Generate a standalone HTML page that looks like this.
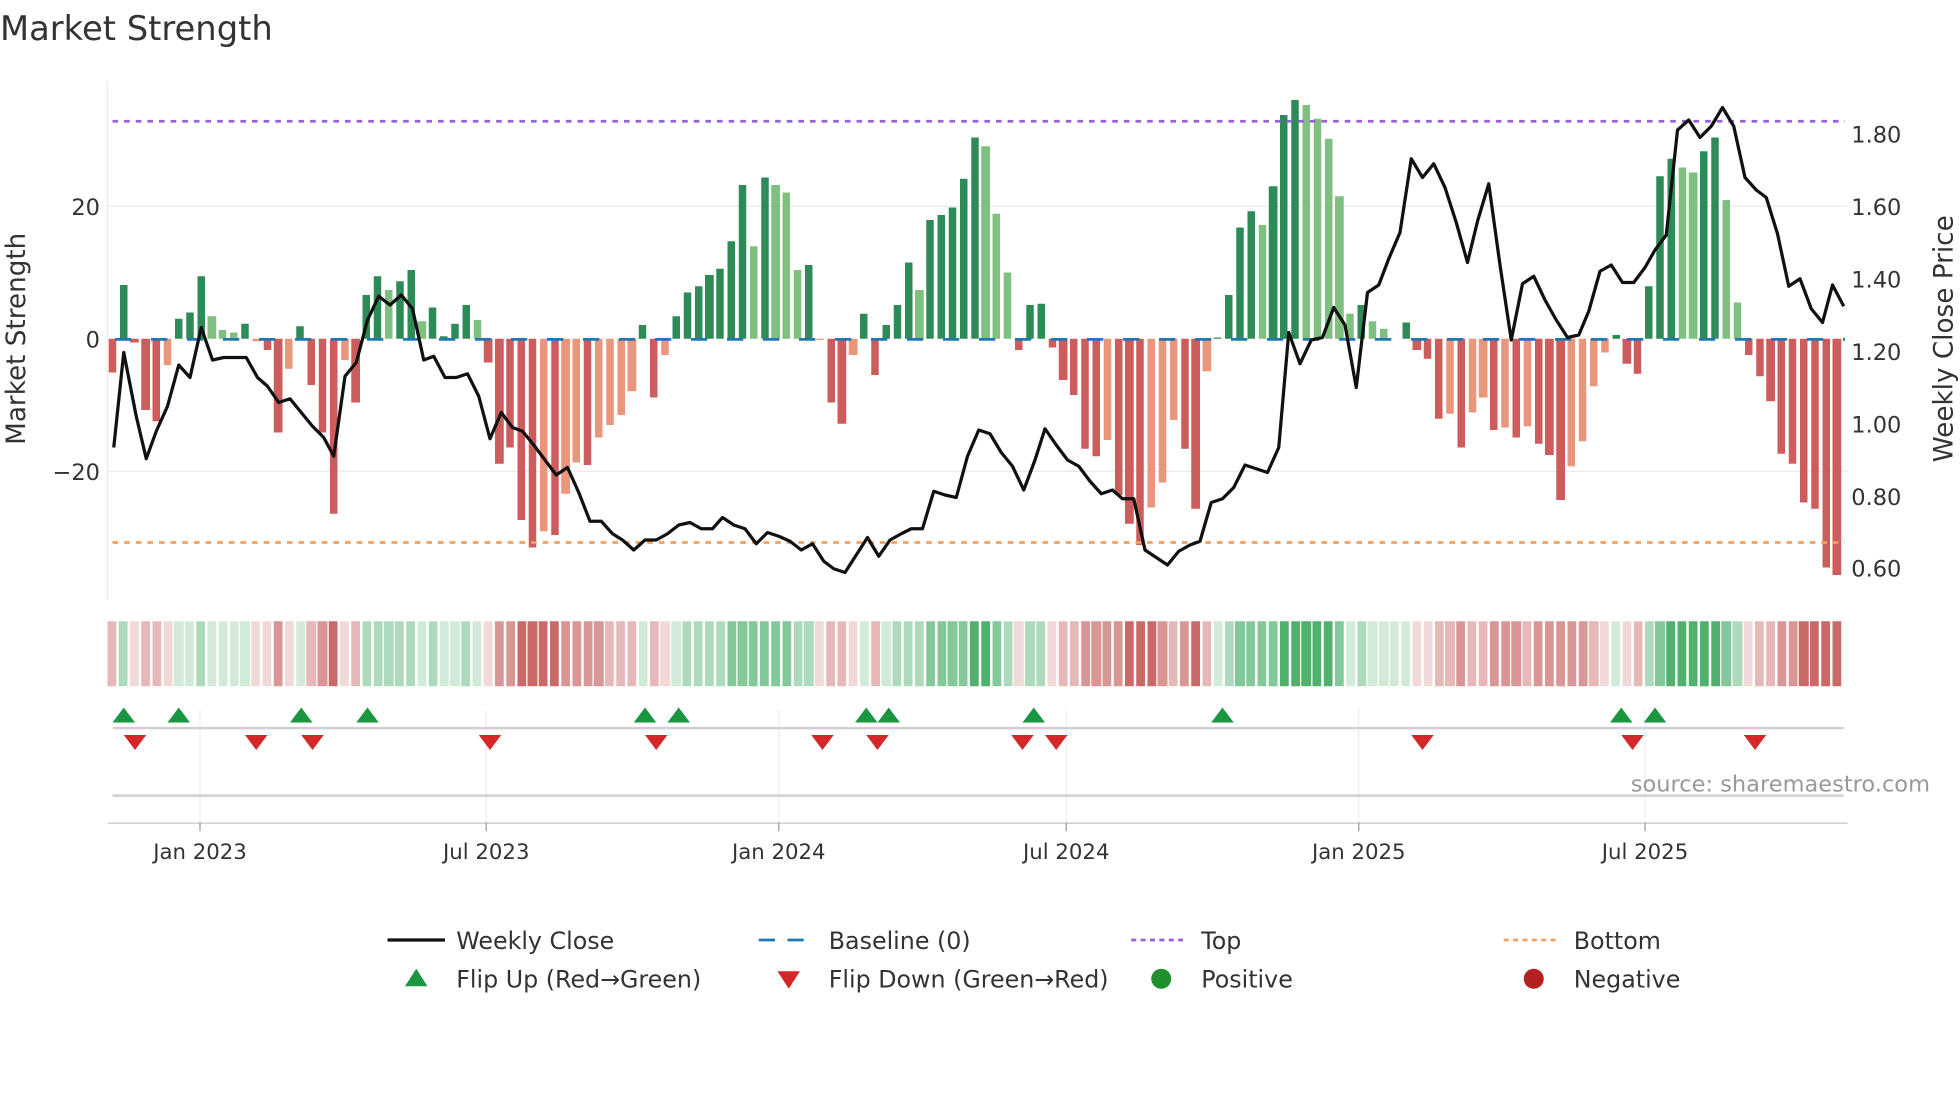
<!DOCTYPE html>
<html><head><meta charset="utf-8">
<style>
html,body{margin:0;padding:0;background:#fff;overflow:hidden;}
#w{position:absolute;left:0;top:0;width:1568px;height:882px;transform:scale(1.25);transform-origin:0 0;font-family:"DejaVu Sans","Liberation Sans",sans-serif;}
svg{position:absolute;left:0;top:0;}
#bars{position:absolute;left:85.465px;top:0;height:271px;display:flex;align-items:flex-end;}
#bars b{display:block;width:6.2px;margin:0 1.335px;flex:none;}
#bars .R,#bars .r{transform:translateY(100%);}
.G{background:#2e8b57}.g{background:#7fbf7f}.R{background:#cd5c5c}.r{background:#e9967a}
#heat{position:absolute;left:85.465px;top:497px;height:52px;display:flex;}
#heat i{display:block;width:7.2px;margin:0 0.835px;height:52px;flex:none;}
.a1{background:rgba(49,163,84,.22)}.a2{background:rgba(49,163,84,.4)}.a3{background:rgba(49,163,84,.6)}.a4{background:rgba(49,163,84,.85)}
.b1{background:rgba(192,80,77,.22)}.b2{background:rgba(192,80,77,.4)}.b3{background:rgba(192,80,77,.6)}.b4{background:rgba(192,80,77,.85)}
</style></head>
<body><div id="w">
<svg width="1568" height="882" viewBox="0 0 1568 882">
<g stroke="#ececf0" stroke-width="1.2">
<line x1="86" y1="165" x2="1478" y2="165"/>
<line x1="86" y1="377" x2="1478" y2="377"/>
<line x1="86" y1="65" x2="86" y2="480"/>
</g>
</svg>
<div id="bars">
<b class=R style=height:27px></b><b class=G style=height:43px></b><b class=R style=height:3px></b><b class=R style=height:57px></b><b class=R style=height:66px></b><b class=r style=height:21px></b><b class=G style=height:16px></b><b class=G style=height:21px></b><b class=G style=height:50px></b><b class=g style=height:18px></b>
<b class=g style=height:7px></b><b class=g style=height:5px></b><b class=G style=height:12px></b><b class=r style=height:2px></b><b class=R style=height:9px></b><b class=R style=height:75px></b><b class=r style=height:24px></b><b class=G style=height:10px></b><b class=R style=height:37px></b><b class=R style=height:75px></b>
<b class=R style=height:140px></b><b class=r style=height:17px></b><b class=R style=height:51px></b><b class=G style=height:35px></b><b class=G style=height:50px></b><b class=g style=height:39px></b><b class=G style=height:46px></b><b class=G style=height:55px></b><b class=g style=height:14px></b><b class=G style=height:25px></b>
<b class=G style=height:2px></b><b class=G style=height:12px></b><b class=G style=height:27px></b><b class=g style=height:15px></b><b class=R style=height:19px></b><b class=R style=height:100px></b><b class=R style=height:87px></b><b class=R style=height:145px></b><b class=R style=height:167px></b><b class=r style=height:154px></b>
<b class=R style=height:157px></b><b class=r style=height:124px></b><b class=r style=height:99px></b><b class=R style=height:101px></b><b class=r style=height:79px></b><b class=r style=height:69px></b><b class=r style=height:61px></b><b class=r style=height:42px></b><b class=G style=height:11px></b><b class=R style=height:47px></b>
<b class=r style=height:13px></b><b class=G style=height:18px></b><b class=G style=height:37px></b><b class=G style=height:42px></b><b class=G style=height:51px></b><b class=G style=height:56px></b><b class=G style=height:78px></b><b class=G style=height:123px></b><b class=g style=height:74px></b><b class=G style=height:129px></b>
<b class=g style=height:123px></b><b class=g style=height:117px></b><b class=g style=height:55px></b><b class=G style=height:59px></b><b class=r style=height:1px></b><b class=R style=height:51px></b><b class=R style=height:68px></b><b class=r style=height:13px></b><b class=G style=height:20px></b><b class=R style=height:29px></b>
<b class=G style=height:11px></b><b class=G style=height:27px></b><b class=G style=height:61px></b><b class=g style=height:39px></b><b class=G style=height:95px></b><b class=G style=height:99px></b><b class=G style=height:105px></b><b class=G style=height:128px></b><b class=G style=height:161px></b><b class=g style=height:154px></b>
<b class=g style=height:100px></b><b class=g style=height:53px></b><b class=R style=height:9px></b><b class=G style=height:27px></b><b class=G style=height:28px></b><b class=R style=height:7px></b><b class=R style=height:33px></b><b class=R style=height:45px></b><b class=R style=height:88px></b><b class=R style=height:94px></b>
<b class=r style=height:81px></b><b class=R style=height:125px></b><b class=R style=height:148px></b><b class=R style=height:165px></b><b class=r style=height:135px></b><b class=r style=height:115px></b><b class=r style=height:65px></b><b class=R style=height:88px></b><b class=R style=height:136px></b><b class=r style=height:26px></b>
<b class=G style=height:1px></b><b class=G style=height:35px></b><b class=G style=height:89px></b><b class=G style=height:102px></b><b class=g style=height:91px></b><b class=G style=height:122px></b><b class=G style=height:179px></b><b class=G style=height:191px></b><b class=g style=height:187px></b><b class=g style=height:176px></b>
<b class=g style=height:160px></b><b class=g style=height:114px></b><b class=g style=height:20px></b><b class=G style=height:27px></b><b class=g style=height:14px></b><b class=g style=height:8px></b><b class=G style=height:0px></b><b class=G style=height:13px></b><b class=R style=height:9px></b><b class=R style=height:16px></b>
<b class=R style=height:64px></b><b class=r style=height:60px></b><b class=R style=height:87px></b><b class=r style=height:59px></b><b class=r style=height:47px></b><b class=R style=height:73px></b><b class=r style=height:71px></b><b class=R style=height:79px></b><b class=r style=height:70px></b><b class=R style=height:84px></b>
<b class=R style=height:93px></b><b class=R style=height:129px></b><b class=r style=height:102px></b><b class=r style=height:82px></b><b class=r style=height:38px></b><b class=r style=height:11px></b><b class=G style=height:3px></b><b class=R style=height:20px></b><b class=R style=height:28px></b><b class=G style=height:42px></b>
<b class=G style=height:130px></b><b class=G style=height:144px></b><b class=g style=height:137px></b><b class=g style=height:133px></b><b class=G style=height:150px></b><b class=G style=height:161px></b><b class=g style=height:111px></b><b class=g style=height:29px></b><b class=R style=height:13px></b><b class=R style=height:30px></b>
<b class=R style=height:50px></b><b class=R style=height:92px></b><b class=R style=height:100px></b><b class=R style=height:131px></b><b class=R style=height:136px></b><b class=R style=height:183px></b><b class=R style=height:189px></b>
</div>
<div id="heat">
<i class=b2></i><i class=a2></i><i class=b1></i><i class=b2></i><i class=b2></i><i class=b1></i><i class=a1></i><i class=a1></i><i class=a2></i><i class=a1></i>
<i class=a1></i><i class=a1></i><i class=a1></i><i class=b1></i><i class=b1></i><i class=b3></i><i class=b1></i><i class=a1></i><i class=b2></i><i class=b3></i>
<i class=b4></i><i class=b1></i><i class=b2></i><i class=a2></i><i class=a2></i><i class=a2></i><i class=a2></i><i class=a2></i><i class=a1></i><i class=a2></i>
<i class=a1></i><i class=a1></i><i class=a2></i><i class=a1></i><i class=b1></i><i class=b3></i><i class=b3></i><i class=b4></i><i class=b4></i><i class=b4></i>
<i class=b4></i><i class=b3></i><i class=b3></i><i class=b3></i><i class=b3></i><i class=b2></i><i class=b2></i><i class=b2></i><i class=a1></i><i class=b2></i>
<i class=b1></i><i class=a1></i><i class=a2></i><i class=a2></i><i class=a2></i><i class=a2></i><i class=a3></i><i class=a3></i><i class=a3></i><i class=a3></i>
<i class=a3></i><i class=a3></i><i class=a2></i><i class=a2></i><i class=b1></i><i class=b2></i><i class=b2></i><i class=b1></i><i class=a1></i><i class=b2></i>
<i class=a1></i><i class=a2></i><i class=a2></i><i class=a2></i><i class=a3></i><i class=a3></i><i class=a3></i><i class=a3></i><i class=a4></i><i class=a4></i>
<i class=a3></i><i class=a2></i><i class=b1></i><i class=a2></i><i class=a2></i><i class=b1></i><i class=b2></i><i class=b2></i><i class=b3></i><i class=b3></i>
<i class=b3></i><i class=b3></i><i class=b4></i><i class=b4></i><i class=b4></i><i class=b3></i><i class=b2></i><i class=b3></i><i class=b4></i><i class=b2></i>
<i class=a1></i><i class=a2></i><i class=a3></i><i class=a3></i><i class=a3></i><i class=a3></i><i class=a4></i><i class=a4></i><i class=a4></i><i class=a4></i>
<i class=a4></i><i class=a3></i><i class=a1></i><i class=a2></i><i class=a1></i><i class=a1></i><i class=a1></i><i class=a1></i><i class=b1></i><i class=b1></i>
<i class=b2></i><i class=b2></i><i class=b3></i><i class=b2></i><i class=b2></i><i class=b3></i><i class=b3></i><i class=b3></i><i class=b2></i><i class=b3></i>
<i class=b3></i><i class=b3></i><i class=b3></i><i class=b3></i><i class=b2></i><i class=b1></i><i class=a1></i><i class=b1></i><i class=b2></i><i class=a2></i>
<i class=a3></i><i class=a4></i><i class=a4></i><i class=a4></i><i class=a4></i><i class=a4></i><i class=a3></i><i class=a2></i><i class=b1></i><i class=b2></i>
<i class=b2></i><i class=b3></i><i class=b3></i><i class=b4></i><i class=b4></i><i class=b4></i><i class=b4></i>
</div>
<svg width="1568" height="882" viewBox="0 0 1568 882">
<text x="0" y="32" font-size="27" fill="#333">Market Strength</text>
<line x1="90" y1="97" x2="1476" y2="97" stroke="#9b5fd6" stroke-width="2.2" stroke-dasharray="4.5 4.8"/>
<line x1="90" y1="434" x2="1476" y2="434" stroke="#f0a060" stroke-width="2.2" stroke-dasharray="4.5 4.8"/>
<line x1="92" y1="271.5" x2="1476" y2="271.5" stroke="#1f77b4" stroke-width="2.2" stroke-dasharray="13 15.8"/>
<polyline fill="none" stroke="#111" stroke-width="2.6" stroke-linejoin="round" points="91,358 99,282 109,333 117,367 125,345 134,325 143,292 152,302 161,262 170,288 179,286 188,286 197,286 206,302 214,309 223,322 232,319 241,330 250,341 259,350 267,365 276,301 285,290 294,256 303,237 312,244 321,236 330,247 339,288 347,285 356,302 365,302 374,299 383,317 392,351 401,330 410,342 418,345 427,356 436,368 445,380 454,374 463,394 472,417 481,417 490,427 498,432 507,440 516,432 525,432 534,427 543,420 552,418 561,423 570,423 578,414 587,420 596,423 605,435 614,426 623,429 632,433 641,440 650,435 659,449 667,455 676,458 685,444 694,430 703,445 712,432 721,427 729,423 738,423 747,393 756,396 765,398 774,365 783,344 792,347 801,362 810,373 819,392 828,368 836,343 845,356 854,368 863,373 872,385 881,395 890,392 898,399 907,399 916,440 925,446 934,452 943,441 952,436 960,433 969,402 978,399 987,390 996,372 1005,375 1014,378 1023,358 1031,266 1040,291 1049,272 1058,270 1067,246 1076,260 1085,310 1094,234 1103,228 1111,207 1120,186 1129,127 1138,142 1147,131 1156,150 1165,178 1174,210 1182,177 1191,147 1200,212 1209,272 1218,227 1227,221 1236,240 1245,256 1254,270 1263,268 1271,249 1280,217 1289,212 1298,226 1307,226 1316,214 1324,200 1333,188 1342,104 1351,96 1360,110 1369,101 1378,86 1387,101 1396,142 1405,152 1413,158 1422,187 1431,229 1440,223 1449,247 1458,258 1466,228 1475,245"/>
<g font-size="18" fill="#333" text-anchor="end">
<text x="80" y="172">20</text>
<text x="80" y="278">0</text>
<text x="80" y="384">−20</text>
</g>
<text transform="translate(20,271) rotate(-90)" font-size="21" fill="#333" text-anchor="middle">Market Strength</text>
<g font-size="18" fill="#333">
<text x="1481" y="114">1.80</text>
<text x="1481" y="172">1.60</text>
<text x="1481" y="230">1.40</text>
<text x="1481" y="288">1.20</text>
<text x="1481" y="346">1.00</text>
<text x="1481" y="404">0.80</text>
<text x="1481" y="461">0.60</text>
</g>
<text transform="translate(1562,271) rotate(-90)" font-size="21" fill="#333" text-anchor="middle">Weekly Close Price</text>
<g stroke="#ececf2" stroke-width="1">
<line x1="160" y1="568" x2="160" y2="658"/><line x1="389" y1="568" x2="389" y2="658"/>
<line x1="623" y1="568" x2="623" y2="658"/><line x1="853" y1="568" x2="853" y2="658"/>
<line x1="1087" y1="568" x2="1087" y2="658"/><line x1="1316" y1="568" x2="1316" y2="658"/>
</g>
<line x1="90" y1="582.5" x2="1475" y2="582.5" stroke="#d0d0d4" stroke-width="2"/>
<line x1="90" y1="636.5" x2="1475" y2="636.5" stroke="#d0d0d4" stroke-width="2"/>
<line x1="86" y1="658.5" x2="1478" y2="658.5" stroke="#ccc" stroke-width="1.2"/>
<g stroke="#aaa" stroke-width="1.2">
<line x1="160" y1="658" x2="160" y2="665"/><line x1="389" y1="658" x2="389" y2="665"/>
<line x1="623" y1="658" x2="623" y2="665"/><line x1="853" y1="658" x2="853" y2="665"/>
<line x1="1087" y1="658" x2="1087" y2="665"/><line x1="1316" y1="658" x2="1316" y2="665"/>
</g>
<g font-size="17" fill="#333" text-anchor="middle">
<text x="160" y="687">Jan 2023</text><text x="389" y="687">Jul 2023</text>
<text x="623" y="687">Jan 2024</text><text x="853" y="687">Jul 2024</text>
<text x="1087" y="687">Jan 2025</text><text x="1316" y="687">Jul 2025</text>
</g>
<text x="1544" y="633" font-size="18" fill="#999" text-anchor="end">source: sharemaestro.com</text>
<g fill="#1a9641">
<polygon points="90,578 108,578 99,566"/><polygon points="134,578 152,578 143,566"/><polygon points="232,578 250,578 241,566"/><polygon points="285,578 303,578 294,566"/>
<polygon points="507,578 525,578 516,566"/><polygon points="534,578 552,578 543,566"/><polygon points="684,578 702,578 693,566"/><polygon points="702,578 720,578 711,566"/>
<polygon points="818,578 836,578 827,566"/><polygon points="969,578 987,578 978,566"/><polygon points="1288,578 1306,578 1297,566"/><polygon points="1315,578 1333,578 1324,566"/>
</g>
<g fill="#d62728">
<polygon points="99,588 117,588 108,600"/><polygon points="196,588 214,588 205,600"/><polygon points="241,588 259,588 250,600"/><polygon points="383,588 401,588 392,600"/>
<polygon points="516,588 534,588 525,600"/><polygon points="649,588 667,588 658,600"/><polygon points="693,588 711,588 702,600"/><polygon points="809,588 827,588 818,600"/>
<polygon points="836,588 854,588 845,600"/><polygon points="1129,588 1147,588 1138,600"/><polygon points="1297,588 1315,588 1306,600"/><polygon points="1395,588 1413,588 1404,600"/>
</g>
<g font-size="19" fill="#333">
<line x1="310" y1="752" x2="356" y2="752" stroke="#111" stroke-width="2.6"/>
<text x="365" y="759">Weekly Close</text>
<line x1="607" y1="752" x2="651" y2="752" stroke="#1f77b4" stroke-width="2.2" stroke-dasharray="13 10"/>
<text x="663" y="759">Baseline (0)</text>
<line x1="905" y1="752" x2="949" y2="752" stroke="#9b5fd6" stroke-width="2.2" stroke-dasharray="4 3.5"/>
<text x="961" y="759">Top</text>
<line x1="1203" y1="752" x2="1247" y2="752" stroke="#f0a060" stroke-width="2.2" stroke-dasharray="4 3.5"/>
<text x="1259" y="759">Bottom</text>
<polygon points="324,789 342,789 333,775" fill="#1a9641"/>
<text x="365" y="790">Flip Up (Red→Green)</text>
<polygon points="622,777 640,777 631,791" fill="#d62728"/>
<text x="663" y="790">Flip Down (Green→Red)</text>
<circle cx="929" cy="783" r="8" fill="#1f8f2f"/>
<text x="961" y="790">Positive</text>
<circle cx="1227" cy="783" r="8" fill="#b22222"/>
<text x="1259" y="790">Negative</text>
</g>
</svg>
</div></body></html>
